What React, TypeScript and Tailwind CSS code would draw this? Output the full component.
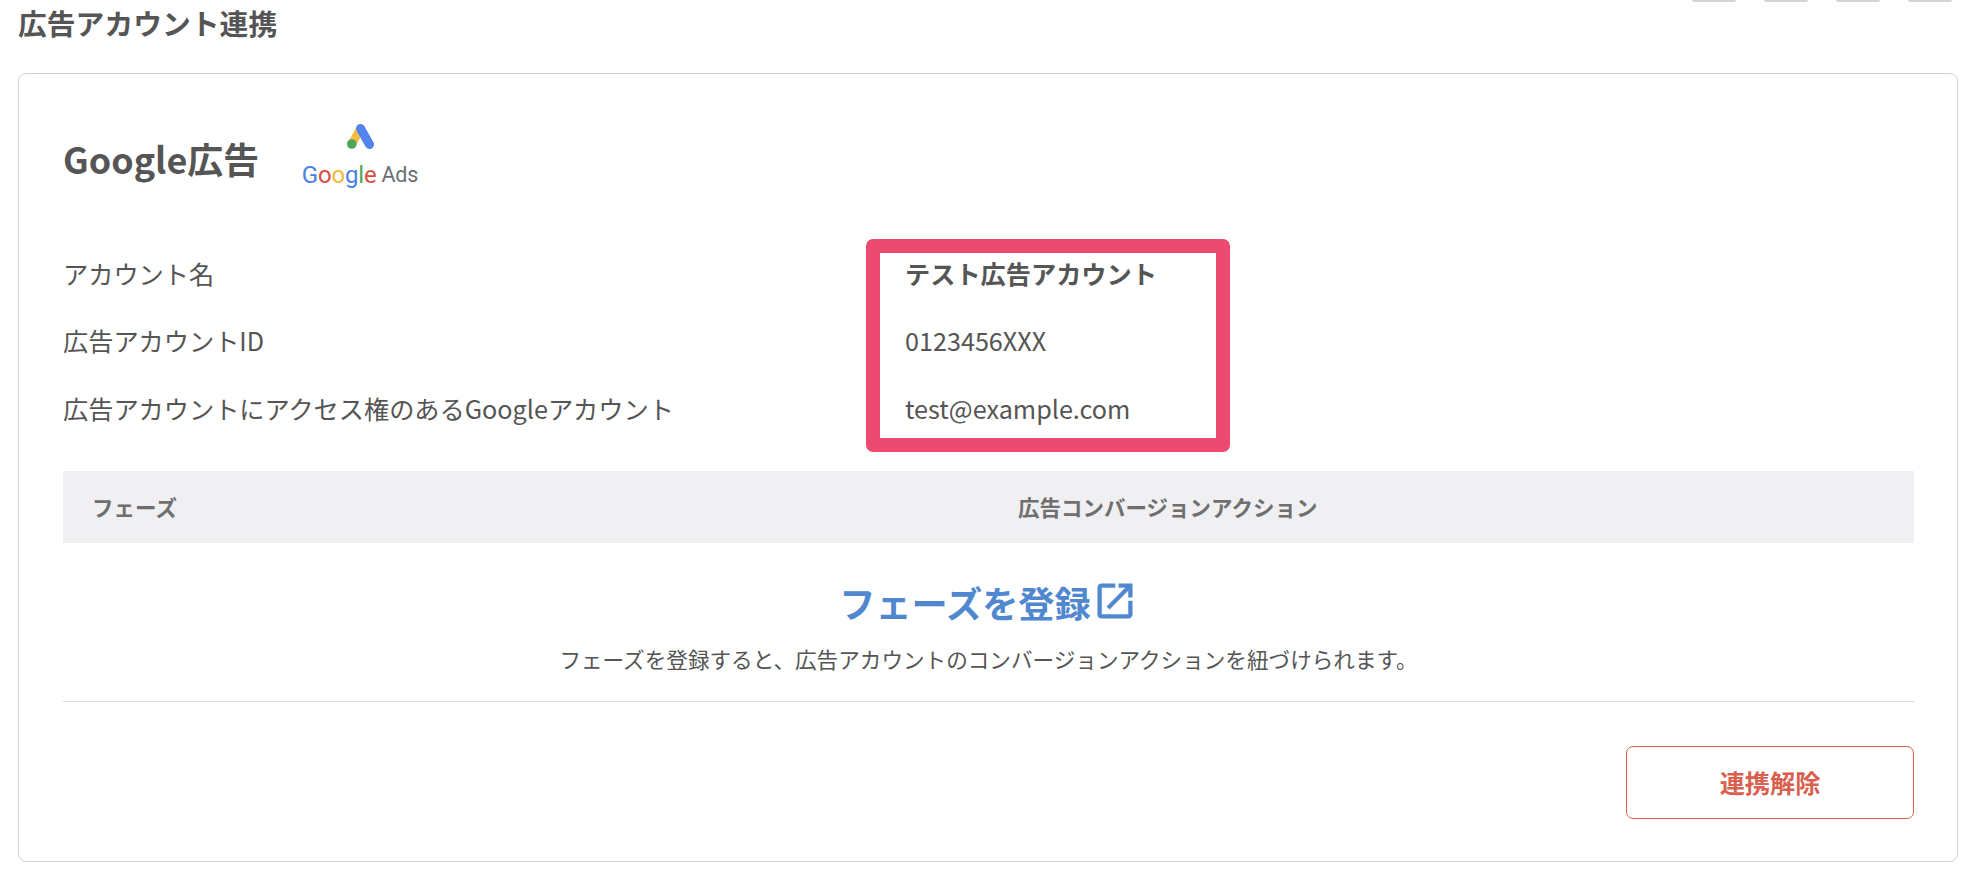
const rows = [
  { label: 'アカウント名', value: 'テスト広告アカウント', bold: true },
  { label: '広告アカウントID', value: '0123456XXX', bold: false },
  { label: '広告アカウントにアクセス権のあるGoogleアカウント', value: 'test@example.com', bold: false },
]

function GoogleAdsLogo() {
  return (
    <div className="flex w-[130px] flex-col items-center">
      <svg width="27" height="25" viewBox="0 0 27 25">
        <path d="M13.5 4.5 L5 20" stroke="#f2bd42" strokeWidth="8.5" strokeLinecap="round" fill="none" />
        <path d="M13.5 4.5 L22.5 20.5" stroke="#5384ed" strokeWidth="9" strokeLinecap="round" fill="none" />
        <circle cx="4.8" cy="20" r="4.8" fill="#4ea659" />
      </svg>
      <div className="mt-[13px] flex h-[26px] items-center font-['Roboto',sans-serif] text-[24px] leading-none tracking-[-0.2px]">
        <span className="text-[#4a80e8]">G</span>
        <span className="text-[#d9503f]">o</span>
        <span className="text-[#f0b93a]">o</span>
        <span className="text-[#4a80e8]">g</span>
        <span className="text-[#4ea659]">l</span>
        <span className="text-[#d9503f]">e</span>
        <span className="ml-[5px] text-[21.5px] text-[#6b6f72]">Ads</span>
      </div>
    </div>
  )
}

export default function App() {
  return (
    <div className="relative h-[870px] w-[1980px] overflow-hidden bg-white pl-[18px] pr-[22px] font-['Noto_Sans_CJK_JP',sans-serif] text-[#555555]">
      {/* Title row, the small buttons are cut off by the top of the page */}
      <div className="flex h-[73px] items-start justify-between">
        <h1 className="mt-[2px] text-[28.8px] font-bold leading-[42px]">広告アカウント連携</h1>
        <div className="mr-[6px] flex gap-[28px]">
          {[0, 1, 2, 3].map((i) => (
            <div key={i} className="h-[2px] w-[44px] rounded-b-[3px] bg-[#d4d4d4]" />
          ))}
        </div>
      </div>

      {/* Card */}
      <div className="h-[789px] rounded-[8px] border border-[#d2d2d2] pl-[44px] pr-[43px]">
        <div className="flex h-[166px] items-start pt-[50px]">
          <h2 className="-mt-[1px] w-[232px] text-[35.9px] font-bold leading-[70px]">Google広告</h2>
          <GoogleAdsLogo />
        </div>

        <div className="flex flex-col">
          {rows.map((r) => (
            <div key={r.label} className="flex h-[67.5px] items-center text-[25.2px]">
              <div className="w-[842px]">{r.label}</div>
              <div className={r.bold ? 'font-bold' : ''}>{r.value}</div>
            </div>
          ))}
        </div>

        <div className="mt-[28.5px] flex h-[72px] items-center bg-[#f0f0f2] text-[21.5px] font-bold text-[#6f6f6f]">
          <div className="w-[955px] pl-[29px]">フェーズ</div>
          <div>広告コンバージョンアクション</div>
        </div>

        <div className="flex flex-col items-center border-b border-[#dcdcdc] pb-[26px] pt-[37px]">
          <a className="flex items-center gap-[1px] text-[36.2px] font-bold leading-[42px] text-[#5088cf]">
            フェーズを登録
            <svg width="46" height="46" viewBox="0 0 24 24" fill="#5088cf" stroke="#5088cf" strokeWidth="0.25" className="-mt-[2px]">
              <path d="M19 19H5V5h7V3H5a2 2 0 00-2 2v14a2 2 0 002 2h14c1.1 0 2-.9 2-2v-7h-2v7zM14 3v2h3.59l-9.83 9.83 1.41 1.41L19 6.41V10h2V3h-7z" />
            </svg>
          </a>
          <p className="mt-[19px] text-[21.6px] leading-[32px]">
            フェーズを登録すると、広告アカウントのコンバージョンアクションを紐づけられます。
          </p>
        </div>

        <div className="mt-[44px] flex justify-end">
          <button className="h-[73px] w-[288px] rounded-[7px] border border-[#d9604e] text-[25.2px] font-bold text-[#d9604e]">
            連携解除
          </button>
        </div>
      </div>

      {/* Highlight annotation over the values */}
      <div className="absolute left-[866px] top-[239px] h-[213px] w-[364px] rounded-[7px] border-[14px] border-[#ec4a70]" />
    </div>
  )
}
